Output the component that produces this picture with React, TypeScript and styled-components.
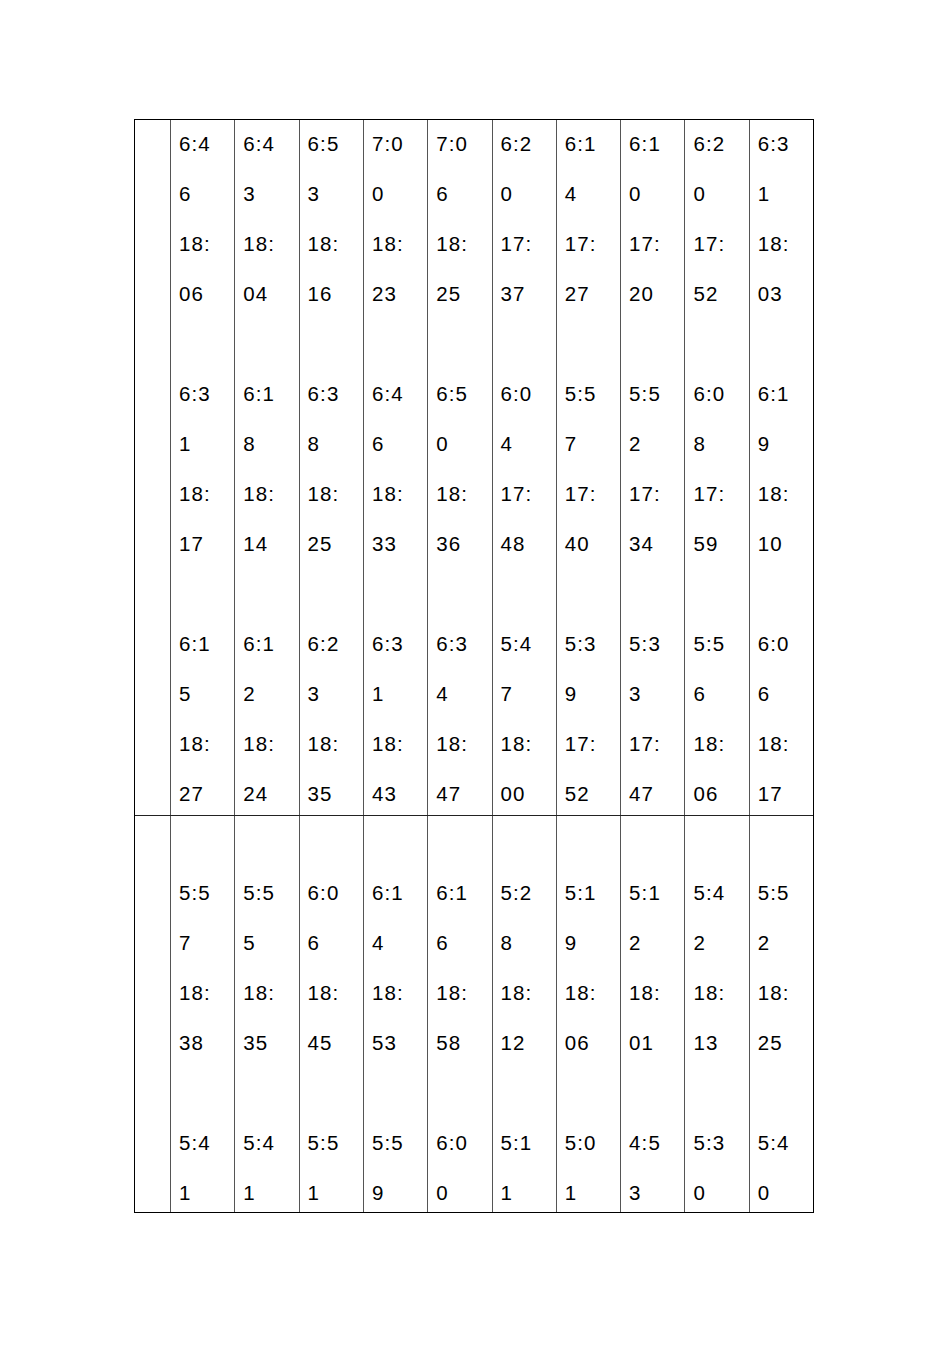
import React from 'react';
import styled, { createGlobalStyle } from 'styled-components';

const GlobalStyle = createGlobalStyle`
  html, body {
    margin: 0;
    padding: 0;
    background: #ffffff;
  }
  body {
    font-family: 'Liberation Sans', Arial, sans-serif;
    color: #000;
  }
`;

// each column: time pairs, top to bottom
const upper = [
  ['6:46', '18:06', '6:31', '18:17', '6:15', '18:27'],
  ['6:43', '18:04', '6:18', '18:14', '6:12', '18:24'],
  ['6:53', '18:16', '6:38', '18:25', '6:23', '18:35'],
  ['7:00', '18:23', '6:46', '18:33', '6:31', '18:43'],
  ['7:06', '18:25', '6:50', '18:36', '6:34', '18:47'],
  ['6:20', '17:37', '6:04', '17:48', '5:47', '18:00'],
  ['6:14', '17:27', '5:57', '17:40', '5:39', '17:52'],
  ['6:10', '17:20', '5:52', '17:34', '5:33', '17:47'],
  ['6:20', '17:52', '6:08', '17:59', '5:56', '18:06'],
  ['6:31', '18:03', '6:19', '18:10', '6:06', '18:17'],
];

const lower = [
  ['5:57', '18:38', '5:41'],
  ['5:55', '18:35', '5:41'],
  ['6:06', '18:45', '5:51'],
  ['6:14', '18:53', '5:59'],
  ['6:16', '18:58', '6:00'],
  ['5:28', '18:12', '5:11'],
  ['5:19', '18:06', '5:01'],
  ['5:12', '18:01', '4:53'],
  ['5:42', '18:13', '5:30'],
  ['5:52', '18:25', '5:40'],
];

const split = (t: string) => [t.slice(0, 3), t.slice(3)];

const upperLines = (col: string[]) => {
  const out: string[] = [];
  for (let i = 0; i < col.length; i += 2) {
    if (i > 0) out.push('');
    out.push(...split(col[i]), ...split(col[i + 1]));
  }
  return out;
};

const lowerLines = (col: string[]) => ['', ...split(col[0]), ...split(col[1]), '', ...split(col[2])];

const Page = styled.div`
  padding: 119px 0 0 134px;
  height: 1345px;
  box-sizing: border-box;
`;

const Table = styled.div`
  width: 680px;
  border: 1px solid #000;
  box-sizing: border-box;
`;

const Row = styled.div<{ $height: number; $first?: boolean }>`
  display: grid;
  grid-template-columns: 35px repeat(10, 1fr);
  height: ${(p) => p.$height}px;
  border-top: ${(p) => (p.$first ? 'none' : '1px solid #222')};
  overflow: hidden;
`;

const Cell = styled.div<{ $lead?: boolean }>`
  border-left: ${(p) => (p.$lead ? 'none' : '1.5px solid #555')};
  padding: 0 0 0 8px;
  font-size: 20.5px;
  letter-spacing: 1.1px;
  line-height: 50px;
  overflow: hidden;
`;

const Lines = styled.div<{ $shift: number }>`
  margin-top: ${(p) => p.$shift}px;
`;

const Line = styled.div`
  height: 50px;
  white-space: nowrap;
`;

const Column = ({ lines, shift }: { lines: string[]; shift: number }) => (
  <Cell>
    <Lines $shift={shift}>
      {lines.map((l, i) => (
        <Line key={i}>{l || '\u00a0'}</Line>
      ))}
    </Lines>
  </Cell>
);

export default function App() {
  return (
    <Page>
      <GlobalStyle />
      <Table>
        <Row $height={695} $first>
          <Cell $lead />
          {upper.map((c, i) => (
            <Column key={i} shift={-1.5} lines={upperLines(c)} />
          ))}
        </Row>
        <Row $height={396}>
          <Cell $lead />
          {lower.map((c, i) => (
            <Column key={i} shift={2} lines={lowerLines(c)} />
          ))}
        </Row>
      </Table>
    </Page>
  );
}
